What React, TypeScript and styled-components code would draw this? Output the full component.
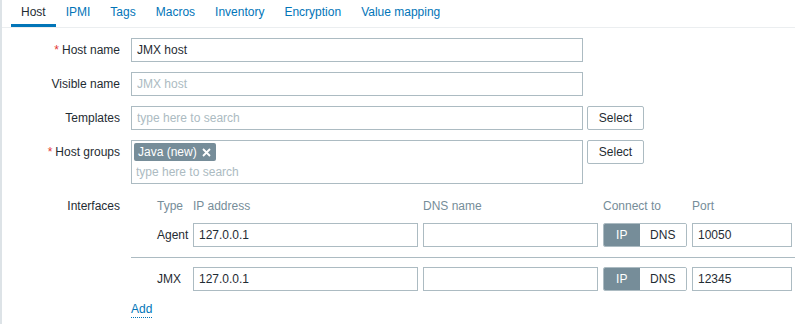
import styled, { createGlobalStyle } from 'styled-components'

const GlobalStyle = createGlobalStyle`
    body {
        margin: 0;
        background: #ffffff;
        font-family: "Liberation Sans", Arial, sans-serif;
        font-size: 12px;
        color: #1f2c33;
    }
`

const Page = styled.div`
    min-height: 324px;
    border-left: 2px solid #dde3e7;
    box-sizing: border-box;
`

const TabBar = styled.div`
    display: flex;
    padding-left: 9px;
    border-bottom: 1px solid #ebeef0;
`

const Tab = styled.div<{ $active?: boolean }>`
    padding: 0 10px;
    line-height: 24px;
    border-bottom: 3px solid ${(p) => (p.$active ? '#0275b8' : 'transparent')};
    color: ${(p) => (p.$active ? '#1f2c33' : '#0275b8')};
    white-space: nowrap;
`

const Form = styled.div`
    display: grid;
    grid-template-columns: 118px 1fr;
    column-gap: 11px;
    row-gap: 10px;
    padding-top: 10px;
`

const Label = styled.div`
    text-align: right;
    line-height: 24px;
    white-space: nowrap;
`

const Required = styled.span`
    color: #e33734;
    margin-right: 3px;
`

const Field = styled.div`
    display: flex;
    align-items: flex-start;
    gap: 4px;
    min-width: 0;
`

const TextBox = styled.input<{ $width?: number }>`
    box-sizing: border-box;
    width: ${(p) => p.$width ?? 452}px;
    height: 24px;
    margin: 0;
    padding: 0 5px;
    border: 1px solid #acbbc2;
    border-radius: 0;
    background: #ffffff;
    font-family: inherit;
    font-size: 12px;
    color: #1f2c33;
    outline: none;

    &::placeholder {
        color: #acbbc2;
        opacity: 1;
    }
`

const Button = styled.button`
    box-sizing: border-box;
    width: 57px;
    height: 24px;
    margin: 0;
    padding: 0;
    border: 1px solid #acbbc2;
    border-radius: 2px;
    background: #ffffff;
    font-family: inherit;
    font-size: 12px;
    color: #1f2c33;
`

const MultiSelect = styled.div`
    box-sizing: border-box;
    width: 452px;
    height: 44px;
    padding: 2px 2px 0;
    border: 1px solid #acbbc2;
`

const Chip = styled.span`
    display: inline-flex;
    align-items: center;
    gap: 5px;
    height: 18px;
    padding: 0 5px 0 4px;
    border-radius: 2px;
    background: #768d99;
    color: #ffffff;
`

const ChipInput = styled.input`
    display: block;
    box-sizing: border-box;
    width: 100%;
    height: 22px;
    margin: 0;
    padding: 0 2px;
    border: none;
    font-family: inherit;
    font-size: 12px;
    outline: none;

    &::placeholder {
        color: #acbbc2;
        opacity: 1;
    }
`

const IfaceTable = styled.div`
    display: flex;
    flex-direction: column;
`

const IfaceRow = styled.div<{ $header?: boolean; $divider?: boolean }>`
    display: grid;
    grid-template-columns: 21px 31px 225px 175px 84px 100px;
    column-gap: 5px;
    align-items: center;
    line-height: 24px;
    padding: ${(p) => (p.$header ? '0' : p.$divider ? '5px 0 10px' : '9px 0 0')};
    border-bottom: ${(p) => (p.$divider ? '1px solid #acbbc2' : 'none')};
    color: ${(p) => (p.$header ? '#768d99' : '#1f2c33')};
    white-space: nowrap;
`

const Toggle = styled.div`
    display: flex;
    box-sizing: border-box;
    height: 24px;
    border: 1px solid #acbbc2;
    border-radius: 2px;
    overflow: hidden;
`

const ToggleOption = styled.div<{ $on?: boolean; $w: number }>`
    width: ${(p) => p.$w}px;
    line-height: 22px;
    text-align: center;
    background: ${(p) => (p.$on ? '#768d99' : '#ffffff')};
    color: ${(p) => (p.$on ? '#ffffff' : '#1f2c33')};
`

const AddLink = styled.a`
    display: inline-block;
    margin-top: 10px;
    line-height: 16px;
    color: #0275b8;
    text-decoration: none;
    border-bottom: 1px dotted #0275b8;
`

const CloseIcon = () => (
    <svg width="9" height="9" viewBox="0 0 9 9">
        <path d="M1 1L8 8M8 1L1 8" stroke="#ffffff" strokeWidth="1.8" />
    </svg>
)

const tabs = ['Host', 'IPMI', 'Tags', 'Macros', 'Inventory', 'Encryption', 'Value mapping']

const interfaces = [
    { type: 'Agent', ip: '127.0.0.1', port: '10050' },
    { type: 'JMX', ip: '127.0.0.1', port: '12345' },
]

export default function App() {
    return (
        <Page>
            <GlobalStyle />
            <TabBar>
                {tabs.map((t) => (
                    <Tab key={t} $active={t === 'Host'}>{t}</Tab>
                ))}
            </TabBar>
            <Form>
                <Label><Required>*</Required>Host name</Label>
                <Field><TextBox defaultValue="JMX host" /></Field>

                <Label>Visible name</Label>
                <Field><TextBox placeholder="JMX host" /></Field>

                <Label>Templates</Label>
                <Field>
                    <TextBox placeholder="type here to search" />
                    <Button>Select</Button>
                </Field>

                <Label><Required>*</Required>Host groups</Label>
                <Field>
                    <MultiSelect>
                        <Chip>Java (new) <CloseIcon /></Chip>
                        <ChipInput placeholder="type here to search" />
                    </MultiSelect>
                    <Button>Select</Button>
                </Field>

                <Label>Interfaces</Label>
                <IfaceTable>
                    <IfaceRow $header>
                        <span />
                        <span>Type</span>
                        <span>IP address</span>
                        <span>DNS name</span>
                        <span>Connect to</span>
                        <span>Port</span>
                    </IfaceRow>
                    {interfaces.map((iface, i) => (
                        <IfaceRow key={iface.type} $divider={i === 0}>
                            <span />
                            <span>{iface.type}</span>
                            <TextBox $width={225} defaultValue={iface.ip} />
                            <TextBox $width={175} />
                            <Toggle>
                                <ToggleOption $on $w={36}>IP</ToggleOption>
                                <ToggleOption $w={47}>DNS</ToggleOption>
                            </Toggle>
                            <TextBox $width={100} defaultValue={iface.port} />
                        </IfaceRow>
                    ))}
                    <div>
                        <AddLink>Add</AddLink>
                    </div>
                </IfaceTable>
            </Form>
        </Page>
    )
}
